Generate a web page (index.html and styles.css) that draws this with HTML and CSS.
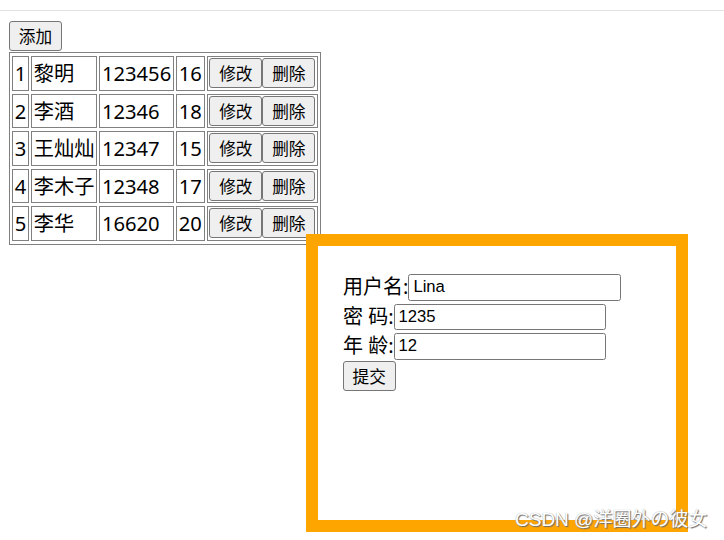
FILE: index.html
```html
<!DOCTYPE html>
<html lang="zh">
<head>
<meta charset="utf-8">
<title>用户列表</title>
<link rel="stylesheet" href="styles.css">
</head>
<body>
<div class="topline"></div>
<main class="page">
  <button class="btn add" type="button">添加</button>
  <table class="grid">
    <tr><td>1</td><td>黎明</td><td>123456</td><td>16</td><td class="ops"><button class="btn" type="button">修改</button><button class="btn" type="button">删除</button></td></tr>
    <tr><td>2</td><td>李酒</td><td>12346</td><td>18</td><td class="ops"><button class="btn" type="button">修改</button><button class="btn" type="button">删除</button></td></tr>
    <tr><td>3</td><td>王灿灿</td><td>12347</td><td>15</td><td class="ops"><button class="btn" type="button">修改</button><button class="btn" type="button">删除</button></td></tr>
    <tr><td>4</td><td>李木子</td><td>12348</td><td>17</td><td class="ops"><button class="btn" type="button">修改</button><button class="btn" type="button">删除</button></td></tr>
    <tr><td>5</td><td>李华</td><td>16620</td><td>20</td><td class="ops"><button class="btn" type="button">修改</button><button class="btn" type="button">删除</button></td></tr>
  </table>
  <form class="panel">
    <div class="row"><label class="lbl">用户名:</label><input class="field" type="text" value="Lina"></div>
    <div class="row"><label class="lbl">密 码:</label><input class="field" type="text" value="1235"></div>
    <div class="row"><label class="lbl">年 龄:</label><input class="field" type="text" value="12"></div>
    <button class="btn submit" type="button">提交</button>
  </form>
</main>
<div class="watermark">CSDN @洋圈外の彼女</div>
</body>
</html>
```
FILE: styles.css
```css
html, body {
  margin: 0;
  background: #fff;
}
body {
  font-family: "Noto Sans", "Noto Sans CJK SC", sans-serif;
  font-size: 20px;
  color: #000;
}
.topline {
  height: 10px;
  border-bottom: 1px solid #e3e3e3;
}
.page {
  padding: 10px 0 0 9px;
}
.btn {
  box-sizing: border-box;
  height: 30px;
  margin: 0;
  padding: 0 8px;
  border: 1px solid #767676;
  border-radius: 3px;
  background: #efefef;
  color: #000;
  font-family: "Noto Sans CJK SC", sans-serif;
  font-size: 16.67px;
  line-height: 28px;
  vertical-align: top;
}
.add {
  display: block;
  width: 53px;
}
.grid {
  margin-top: 1px;
  border: 1px solid #808080;
  border-spacing: 2px 3px;
}
.grid td {
  border: 1px solid #808080;
  padding: 1.25px 1.75px;
  font-size: 20.2px;
  line-height: 30px;
  vertical-align: middle;
  white-space: nowrap;
}
.ops .btn {
  width: 53px;
}
.panel {
  position: absolute;
  left: 306px;
  top: 234px;
  width: 308px;
  height: 224px;
  margin: 0;
  padding: 25px;
  border: 12px solid #ffa500;
  background: #fff;
}
.row {
  display: flex;
  align-items: center;
  height: 26.5px;
  padding-top: 3px;
}
.lbl {
  line-height: 26px;
  white-space: pre;
}
.field {
  box-sizing: border-box;
  width: 212.5px;
  height: 26.5px;
  margin: 0;
  padding: 0 4px;
  border: 1px solid #767676;
  border-radius: 2.5px;
  font-family: "Liberation Sans", Arial, sans-serif;
  font-size: 16.67px;
  color: #000;
}
.submit {
  display: block;
  width: 52.5px;
  margin-top: 1.5px;
}
.watermark {
  position: absolute;
  left: 515px;
  top: 509px;
  font-family: "Liberation Sans", "Noto Sans CJK SC", sans-serif;
  font-size: 19px;
  line-height: 22px;
  color: #fff;
  text-shadow: 1px 1px 1px #6a6a6a, 0 0 1px #999;
  white-space: nowrap;
}
```
